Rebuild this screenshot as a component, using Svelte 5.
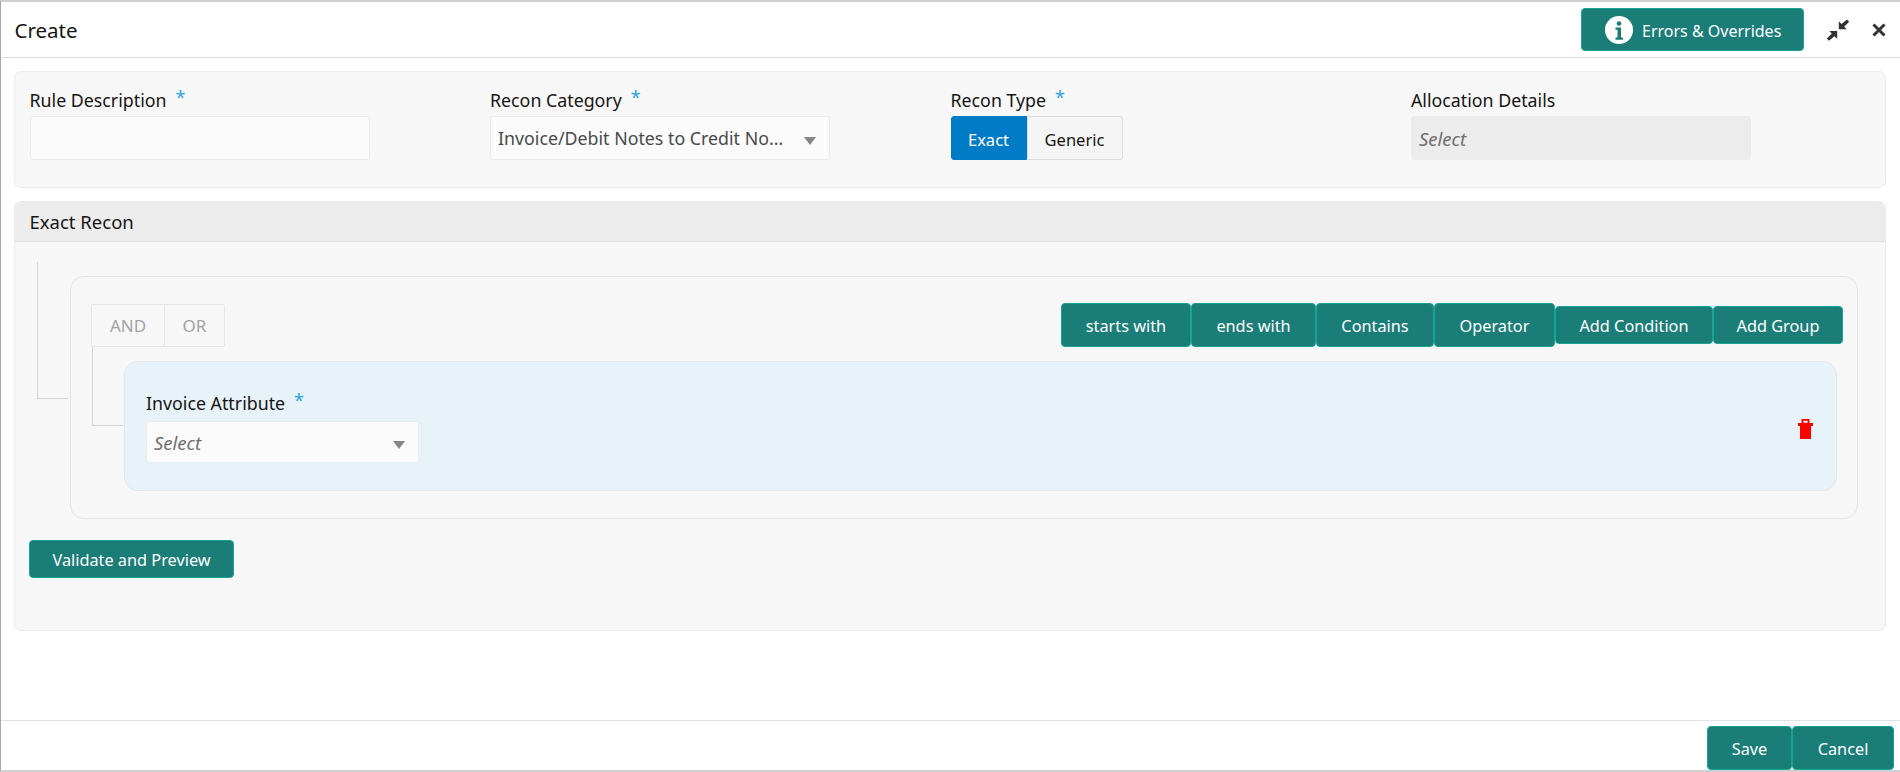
<script>
	const fields = [
		{ label: 'Rule Description', required: true, kind: 'input' },
		{ label: 'Recon Category', required: true, kind: 'select', value: 'Invoice/Debit Notes to Credit No...' },
		{ label: 'Recon Type', required: true, kind: 'toggle' },
		{ label: 'Allocation Details', required: false, kind: 'disabled', value: 'Select' }
	];
	const tools = [
		{ name: 'starts with', width: 130 },
		{ name: 'ends with', width: 125 },
		{ name: 'Contains', width: 118 },
		{ name: 'Operator', width: 121 },
		{ name: 'Add Condition', width: 158, small: true },
		{ name: 'Add Group', width: 130, small: true }
	];
</script>

<div class="page">
	<header class="head">
		<h1>Create</h1>
		<div class="head-actions">
			<button class="btn errors">
				<svg width="28" height="28" viewBox="0 0 28 28" aria-hidden="true">
					<circle cx="14" cy="14" r="14" fill="#fff" />
					<circle cx="14" cy="7.5" r="2.3" fill="#1b7d78" />
					<path d="M10.5 11.5h5.500v10h2v2.200h-7.500v-2.200h2v-7.800h-2z" fill="#1b7d78" />
				</svg>
				Errors &amp; Overrides
			</button>
			<svg class="shrink" width="24" height="24" viewBox="0 0 24 24" aria-hidden="true">
				<path d="M21 1.500l2.200 2.200-5 5 2.600 2.600h-8v-8l2.700 2.700z" fill="#333" />
				<path d="M3 22.800L.8 20.600l5-5-2.600-2.600h8v8l-2.700-2.700z" fill="#333" />
			</svg>
			<svg class="close" width="14" height="14" viewBox="0 0 14 14" aria-hidden="true">
				<path d="M1.500 1.500l11 11M12.500 1.500l-11 11" stroke="#333" stroke-width="3" />
			</svg>
		</div>
	</header>

	<main class="content">
		<section class="panel top">
			{#each fields as field}
				<div class="field">
					<div class="label">{field.label}{#if field.required}<span class="req">*</span>{/if}</div>
					{#if field.kind === 'input'}
						<div class="box"></div>
					{:else if field.kind === 'select'}
						<div class="box select">
							<span class="value">{field.value}</span>
							<span class="caret"></span>
						</div>
					{:else if field.kind === 'toggle'}
						<div class="toggle">
							<button class="on">Exact</button>
							<button class="off">Generic</button>
						</div>
					{:else}
						<div class="box disabled"><span class="placeholder">{field.value}</span></div>
					{/if}
				</div>
			{/each}
		</section>

		<section class="panel recon">
			<h2>Exact Recon</h2>
			<div class="recon-body">
				<div class="group">
					<span class="tree outer"></span>
					<div class="toolbar">
						<div class="logic">
							<span>AND</span>
							<span>OR</span>
						</div>
						<div class="tools">
							{#each tools as tool}
								<button class="btn" class:small={tool.small} style="width: {tool.width}px">{tool.name}</button>
							{/each}
						</div>
					</div>
					<div class="rule-wrap">
						<span class="tree inner"></span>
						<div class="rule">
							<div class="field attr-field">
								<div class="label">Invoice Attribute<span class="req">*</span></div>
								<div class="box select attr">
									<span class="placeholder">Select</span>
									<span class="caret"></span>
								</div>
							</div>
							<svg class="trash" width="15" height="20" viewBox="0 0 15 20" aria-hidden="true">
								<path d="M3.500 4V0h8v4h3.500v3H0V4zm2-.2h4V1.800h-4z" fill="#f00" fill-rule="evenodd" />
								<path d="M2 7h11v13H2z" fill="#f00" />
							</svg>
						</div>
					</div>
				</div>
				<button class="btn validate">Validate and Preview</button>
			</div>
		</section>
	</main>

	<footer class="foot">
		<button class="btn save">Save</button>
		<button class="btn cancel">Cancel</button>
	</footer>
</div>

<style>
	:global(body) {
		margin: 0;
		background: #fff;
		overflow: hidden;
	}

	.page {
		height: 772px;
		box-sizing: border-box;
		display: flex;
		flex-direction: column;
		border-top: 2px solid #d0d0d0;
		border-bottom: 2px solid #d0d0d0;
		border-left: 1px solid #a8a8a8;
		font-family: 'Noto Sans', 'Open Sans', sans-serif;
		font-size: 16px;
		color: #161513;
	}

	.head {
		height: 56px;
		box-sizing: border-box;
		flex: none;
		display: flex;
		align-items: center;
		justify-content: space-between;
		padding-left: 13.500px;
		border-bottom: 1px solid #dedede;
	}

	h1 {
		margin: 0;
		font-size: 20.500px;
		font-weight: 400;
	}

	.head-actions {
		display: flex;
		align-items: center;
		padding-right: 14px;
	}

	.btn {
		box-sizing: border-box;
		height: 44px;
		padding: 2px 0 0;
		background: #1b7d78;
		border: 1px solid #14a595;
		border-radius: 4px;
		color: #fff;
		font: inherit;
		font-size: 16.300px;
	}

	.errors {
		width: 223px;
		height: 43px;
		display: flex;
		align-items: center;
		gap: 9px;
		padding-left: 23px;
		font-size: 16px;
	}

	.errors svg {
		margin-top: -2px;
	}

	.shrink {
		margin-left: 22px;
	}

	.close {
		margin-left: 22px;
	}

	.content {
		flex: 1;
		padding: 13px 14px 0 13px;
	}

	.panel {
		background: #f7f7f7;
		border: 1px solid #ececec;
		border-radius: 7px;
	}

	.top {
		height: 117px;
		box-sizing: border-box;
		display: grid;
		grid-template-columns: repeat(4, 1fr);
		padding: 18px 13.500px 0 14.500px;
	}

	.label {
		height: 26px;
		line-height: 20px;
		font-size: 17.800px;
	}

	.req {
		margin-left: 9px;
		color: #2ea7e0;
		font-size: 18px;
		line-height: 0;
		vertical-align: 3px;
	}

	.box {
		width: 340px;
		height: 44px;
		box-sizing: border-box;
		background: #fbfbfb;
		border: 1px solid #ebebeb;
		border-radius: 3px;
	}

	.select,
	.disabled {
		display: flex;
		align-items: center;
		padding: 0 13px 0 7px;
		font-size: 17.800px;
		color: #4a4a4a;
	}

	.disabled {
		background: #ececec;
		border-color: #ececec;
	}

	.value {
		flex: 1;
		white-space: nowrap;
	}

	.placeholder {
		flex: 1;
		font-size: 18.500px;
		font-style: italic;
		color: #6e6e6e;
	}

	.caret {
		flex: none;
		width: 0;
		height: 0;
		margin-top: 6px;
		border-left: 6px solid transparent;
		border-right: 6px solid transparent;
		border-top: 8px solid #868686;
	}

	.toggle {
		display: flex;
		height: 44px;
	}

	.toggle button {
		box-sizing: border-box;
		height: 44px;
		padding: 2px 0 0;
		font: inherit;
		font-size: 16.500px;
	}

	.on {
		width: 76px;
		background: #007cc7;
		border: 1px solid #007cc7;
		border-radius: 3px 0 0 3px;
		color: #fff;
	}

	.off {
		width: 96px;
		background: #f5f5f5;
		border: 1px solid #dcdcdc;
		border-radius: 0 3px 3px 0;
		color: #161513;
	}

	.recon {
		margin-top: 13px;
		height: 430px;
		box-sizing: border-box;
	}

	h2 {
		margin: 0;
		height: 40px;
		box-sizing: border-box;
		padding: 0 14.500px;
		display: flex;
		align-items: center;
		background: #ececec;
		border-bottom: 1px solid #dedede;
		border-radius: 7px 7px 0 0;
		font-size: 18.500px;
		font-weight: 400;
	}

	.recon-body {
		padding: 34px 27px 0 14px;
	}

	.group {
		position: relative;
		margin-left: 41px;
		height: 243px;
		box-sizing: border-box;
		padding: 26px 14px 0 20px;
		border: 1px solid #e4e4e4;
		border-radius: 14px;
	}

	.tree {
		position: absolute;
		border-left: 1px solid #d4d4d4;
		border-bottom: 1px solid #d4d4d4;
	}

	.outer {
		left: -34px;
		top: -15px;
		width: 30px;
		height: 136px;
	}

	.inner {
		left: -32px;
		top: -14px;
		width: 30px;
		height: 78px;
	}

	.toolbar {
		display: flex;
		align-items: center;
		justify-content: space-between;
	}

	.logic {
		display: flex;
		height: 43px;
		box-sizing: border-box;
		border: 1px solid #e6e6e6;
		border-radius: 2px;
		color: #a3a3a3;
		font-size: 17px;
	}

	.logic span {
		display: flex;
		align-items: center;
		justify-content: center;
		width: 72px;
	}

	.logic span + span {
		width: 59px;
		border-left: 1px solid #e6e6e6;
	}

	.tools {
		display: flex;
		align-items: center;
	}

	.small {
		height: 38px;
	}

	.rule-wrap {
		position: relative;
		margin: 14px 6px 0 33px;
	}

	.rule {
		height: 130px;
		box-sizing: border-box;
		display: flex;
		align-items: center;
		justify-content: space-between;
		padding: 0 23px 0 21px;
		background: #e7f2f9;
		border: 1px solid #dfe8ee;
		border-radius: 14px;
	}

	.attr-field {
		align-self: flex-start;
		margin-top: 28px;
	}

	.attr-field .label {
		height: 31px;
		line-height: 26px;
	}

	.attr {
		width: 273px;
		height: 42px;
	}

	.trash {
		margin-top: 6px;
	}

	.validate {
		display: block;
		width: 205px;
		height: 38px;
		margin-top: 21px;
	}

	.foot {
		margin-top: auto;
		height: 50px;
		box-sizing: border-box;
		flex: none;
		display: flex;
		justify-content: flex-end;
		align-items: flex-end;
		padding-right: 6px;
		border-top: 1px solid #e0e3e5;
	}

	.save {
		width: 85px;
	}

	.cancel {
		width: 102px;
	}
</style>
